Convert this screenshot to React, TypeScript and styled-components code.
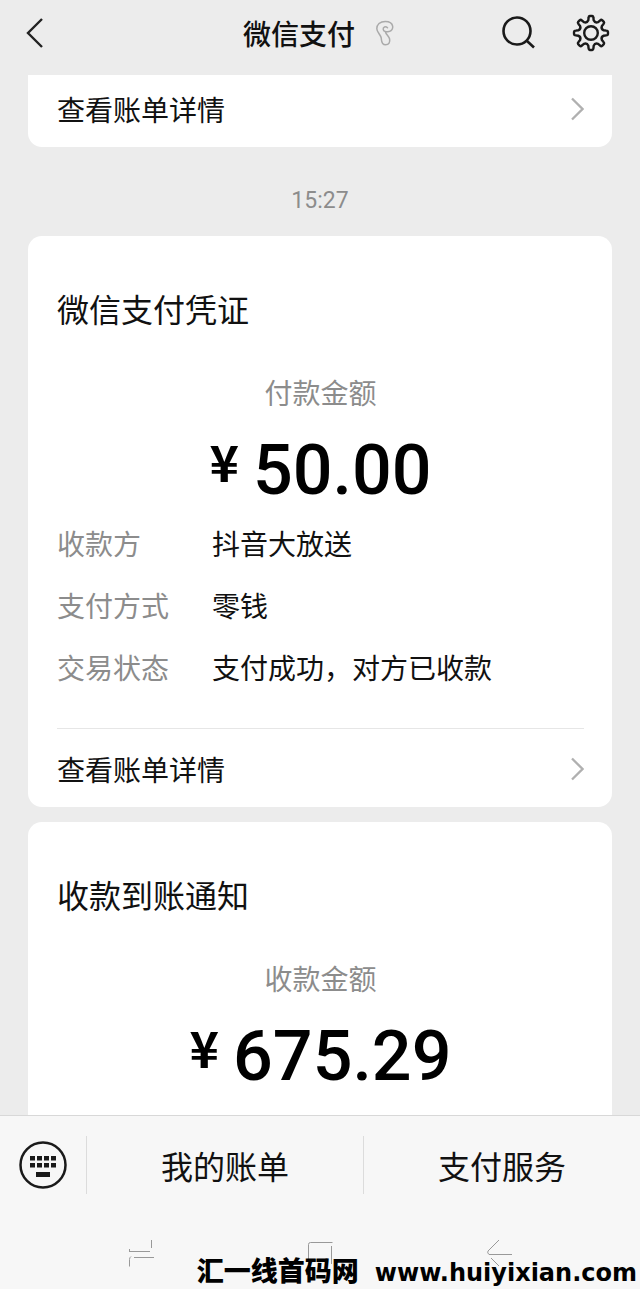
import React from 'react';
import styled, { createGlobalStyle } from 'styled-components';

const GlobalStyle = createGlobalStyle`
  * { box-sizing: border-box; }
  body {
    margin: 0;
    background: #ececec;
    color: #111;
    font-family: "Noto Sans CJK SC", sans-serif;
  }
  button {
    border: 0;
    padding: 0;
    background: none;
    color: inherit;
    font: inherit;
    cursor: pointer;
  }
  svg { display: block; }
`;

const Screen = styled.div`
  display: flex;
  flex-direction: column;
  min-height: 100vh;
`;

const Header = styled.header`
  position: sticky;
  top: 0;
  z-index: 1;
  display: grid;
  grid-template-columns: 1fr auto 1fr;
  align-items: center;
  height: 75px;
  padding: 0 30px 10px 24px;
  background: #ececec;
`;

const Heading = styled.div`
  display: flex;
  align-items: center;
  gap: 20px;
  padding-left: 4px;
`;

const HeadingText = styled.h1`
  margin: 0;
  font-size: 28px;
  line-height: 40px;
  font-weight: 500;
`;

const IconButton = styled.button<{ $align?: string }>`
  display: flex;
  align-items: center;
  justify-content: ${({ $align = 'center' }) => $align};
`;

const Actions = styled.div`
  display: flex;
  justify-content: flex-end;
  gap: 36px;
`;

const Feed = styled.main`
  flex: 1;
  display: flex;
  flex-direction: column;
  padding: 0 28px;
`;

const Card = styled.section<{ $join?: 'top' | 'bottom' }>`
  padding: 0 28px 0 29px;
  background: #fff;
  border-radius: ${({ $join }) =>
    $join === 'top' ? '0 0 14px 14px' : $join === 'bottom' ? '14px 14px 0 0' : '14px'};
  flex-grow: ${({ $join }) => ($join === 'bottom' ? 1 : 0)};
  & + & { margin-top: 15px; }
`;

const Time = styled.time`
  padding: 44px 0 25px;
  text-align: center;
  font-family: Roboto, sans-serif;
  font-size: 23px;
  line-height: 20px;
  color: #8c8c8c;
`;

const CardTitle = styled.h2`
  margin: 0;
  padding-top: 50px;
  font-size: 32px;
  line-height: 44px;
  font-weight: 400;
`;

const Caption = styled.p`
  margin: 42px 0 0;
  text-align: center;
  font-size: 28px;
  line-height: 40px;
  color: #8c8c8c;
`;

const Amount = styled.p`
  display: flex;
  justify-content: center;
  gap: 14px;
  margin: 16px 0 0;
  font-family: Roboto, sans-serif;
  font-size: 70px;
  line-height: 84px;
  font-weight: 500;
  color: #000;
`;

const Currency = styled.span`
  font-family: "Noto Sans CJK SC", sans-serif;
  font-size: 50px;
  line-height: 64px;
  font-weight: 700;
`;

const Details = styled.dl`
  display: grid;
  grid-template-columns: 155px 1fr;
  margin: 0;
  padding-bottom: 30px;
  font-size: 28px;
  line-height: 62px;
`;

const Term = styled.dt`
  color: #8c8c8c;
`;

const Value = styled.dd`
  margin: 0;
`;

const DetailRow = styled.button<{ $clipped?: boolean }>`
  display: flex;
  align-items: center;
  justify-content: space-between;
  width: 100%;
  padding: ${({ $clipped }) => ($clipped ? '14px' : '20px')} 0 18px;
  border-top: ${({ $clipped }) => ($clipped ? '0' : '1px solid #e6e6e6')};
  font-size: 28px;
  line-height: 40px;
`;

const Footer = styled.footer`
  position: sticky;
  bottom: 0;
  background: #f7f7f7;
  border-top: 1px solid #d8d8d8;
`;

const Menu = styled.div`
  display: flex;
  align-items: center;
  height: 98px;
`;

const KeyboardButton = styled(IconButton)`
  width: 86px;
`;

const MenuButton = styled.button`
  flex: 1;
  height: 58px;
  border-left: 1px solid #dcdcdc;
  font-size: 32px;
  line-height: 58px;
`;

const SystemBar = styled.nav`
  display: grid;
  grid-template-columns: repeat(3, 1fr);
  height: 75px;
  padding: 24px 51px 0;
  align-items: start;
`;

const Watermark = styled.div`
  position: absolute;
  right: 3px;
  bottom: 0;
  display: flex;
  align-items: baseline;
  gap: 16px;
  line-height: 32px;
  white-space: nowrap;
  color: #000;
`;

const SiteName = styled.span`
  font-size: 27px;
  font-weight: 900;
`;

const SiteUrl = styled.span`
  font-family: "DejaVu Sans", sans-serif;
  font-size: 24px;
  font-weight: 700;
`;

const gearPath = (() => {
  const at = (deg: number, r: number) => {
    const a = (deg * Math.PI) / 180;
    return `${(19 + r * Math.cos(a)).toFixed(2)} ${(19 + r * Math.sin(a)).toFixed(2)}`;
  };
  let d = '';
  for (let i = 0; i < 8; i++) {
    const t = i * 45;
    d += `${i ? 'L' : 'M'}${at(t - 12, 13)}L${at(t - 9, 15.5)}Q${at(t - 8, 17)} ${at(t - 4, 17)}`;
    d += `L${at(t + 4, 17)}Q${at(t + 8, 17)} ${at(t + 9, 15.5)}L${at(t + 12, 13)}`;
    d += `Q${at(t + 22.5, 10.5)} ${at(t + 33, 13)}`;
  }
  return d + 'Z';
})();

const BackIcon = () => (
  <svg width="20" height="32" viewBox="0 0 20 32" fill="none" stroke="#222" strokeWidth="2.4">
    <path d="M18 2 4 16l14 14" />
  </svg>
);

const EarIcon = () => (
  <svg width="20" height="28" viewBox="0 0 20 28" fill="none" stroke="#aaa" strokeWidth="1.5" strokeLinecap="round">
    <path d="M12.500 8.700C10.500 6.800 8 8.200 8.200 10.200C8.400 12.800 11.500 13.200 13.800 12.600C16.500 11.800 18 9.800 17.700 7.300C17.200 4 14 2.400 10.300 2.400C5 2.400 1.700 5.600 1.800 9.800C1.900 13.300 5.600 15.500 6.200 18.800C6.600 21 6 25.800 10.500 25.800C14 25.800 15.200 23 14.600 20C14 17.200 11 15.800 10.300 12.500" />
  </svg>
);

const SearchIcon = () => (
  <svg width="34" height="36" viewBox="0 0 34 36" fill="none" stroke="#1a1a1a" strokeWidth="2.6">
    <circle cx="15" cy="16" r="13.5" />
    <path d="m24.500 25.500 7.500 7" />
  </svg>
);

const GearIcon = () => (
  <svg width="38" height="38" viewBox="0 0 38 38" fill="none" stroke="#1a1a1a" strokeWidth="2.4" strokeLinejoin="round">
    <path d={gearPath} />
    <circle cx="19" cy="19" r="6.8" />
  </svg>
);

const ChevronIcon = () => (
  <svg width="16" height="24" viewBox="0 0 16 24" fill="none" stroke="#b0b0b0" strokeWidth="2.3">
    <path d="m4 1.500 10.500 10.500L4 22.500" />
  </svg>
);

const KeyboardIcon = () => (
  <svg width="48" height="48" viewBox="0 0 48 48" fill="#1a1a1a">
    <circle cx="24" cy="24" r="22.5" fill="none" stroke="#1a1a1a" strokeWidth="2.5" />
    {[11, 18, 25, 32].map((x) => (
      <React.Fragment key={x}>
        <rect x={x} y="15" width="5" height="4.5" />
        <rect x={x} y="22" width="5" height="4.5" />
      </React.Fragment>
    ))}
    <rect x="17" y="31" width="14" height="5" />
  </svg>
);

const RecentsIcon = () => (
  <svg width="26" height="30" viewBox="0 0 26 30" fill="none" stroke="#999" strokeWidth="1">
    <path d="M23.500 2v8M1 13.500h21M6 19.500h20M1.500 11v3M3 18.500q-1.500 1-1.500 3v7" />
  </svg>
);

const HomeIcon = () => (
  <svg width="26" height="30" viewBox="0 0 26 30" fill="none" stroke="#999" strokeWidth="1">
    <path d="M1.500 26V6.500q0-2 2-2h22M24.500 8v18" />
  </svg>
);

const ReturnIcon = () => (
  <svg width="26" height="30" viewBox="0 0 26 30" fill="none" stroke="#999" strokeWidth="1">
    <path d="M13 2 2 13q-1 2 1 3.500h23M5 20l8 8" />
  </svg>
);

const BillRow = ({ clipped }: { clipped?: boolean }) => (
  <DetailRow type="button" $clipped={clipped}>
    查看账单详情
    <ChevronIcon />
  </DetailRow>
);

const Total = ({ label, value }: { label: string; value: string }) => (
  <>
    <Caption>{label}</Caption>
    <Amount>
      <Currency>¥</Currency>
      <span>{value}</span>
    </Amount>
  </>
);

const details = [
  ['收款方', '抖音大放送'],
  ['支付方式', '零钱'],
  ['交易状态', '支付成功，对方已收款'],
];

export default function App() {
  return (
    <Screen>
      <GlobalStyle />
      <Header>
        <IconButton type="button" aria-label="返回" $align="flex-start">
          <BackIcon />
        </IconButton>
        <Heading>
          <HeadingText>微信支付</HeadingText>
          <EarIcon />
        </Heading>
        <Actions>
          <IconButton type="button" aria-label="搜索">
            <SearchIcon />
          </IconButton>
          <IconButton type="button" aria-label="设置">
            <GearIcon />
          </IconButton>
        </Actions>
      </Header>
      <Feed>
        <Card $join="top">
          <BillRow clipped />
        </Card>
        <Time>15:27</Time>
        <Card>
          <CardTitle>微信支付凭证</CardTitle>
          <Total label="付款金额" value="50.00" />
          <Details>
            {details.map(([term, value]) => (
              <React.Fragment key={term}>
                <Term>{term}</Term>
                <Value>{value}</Value>
              </React.Fragment>
            ))}
          </Details>
          <BillRow />
        </Card>
        <Card $join="bottom">
          <CardTitle>收款到账通知</CardTitle>
          <Total label="收款金额" value="675.29" />
        </Card>
      </Feed>
      <Footer>
        <Menu>
          <KeyboardButton type="button" aria-label="键盘">
            <KeyboardIcon />
          </KeyboardButton>
          <MenuButton type="button">我的账单</MenuButton>
          <MenuButton type="button">支付服务</MenuButton>
        </Menu>
        <SystemBar>
          <IconButton type="button" aria-label="最近任务">
            <RecentsIcon />
          </IconButton>
          <IconButton type="button" aria-label="主屏幕">
            <HomeIcon />
          </IconButton>
          <IconButton type="button" aria-label="后退">
            <ReturnIcon />
          </IconButton>
        </SystemBar>
        <Watermark>
          <SiteName>汇一线首码网</SiteName>
          <SiteUrl>www.huiyixian.com</SiteUrl>
        </Watermark>
      </Footer>
    </Screen>
  );
}
